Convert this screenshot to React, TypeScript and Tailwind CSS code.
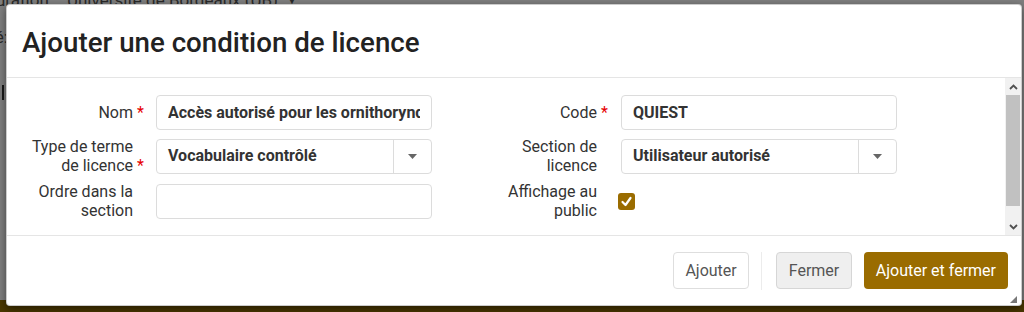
import React from 'react';

const Required = () => (
  <span className="inline-block w-0 whitespace-nowrap">
    <span className="ml-[4px] text-[#e60000]">*</span>
  </span>
);

const Label = ({ children, required }: { children: React.ReactNode; required?: boolean }) => (
  <div className="w-[111px] shrink-0 text-right text-[16px] leading-[19px] text-[#333]">
    {children}
    {required && <Required />}
  </div>
);

const TextInput = ({ value }: { value?: string }) => (
  <div className="flex h-[35px] w-[276px] items-center rounded-[4px] border border-[#dcdcdc] bg-white px-[11px] text-[16px] font-bold text-[#333]">
    <span className="block overflow-hidden whitespace-nowrap">{value}</span>
  </div>
);

const Select = ({ value }: { value: string }) => (
  <div className="flex h-[35px] w-[276px] items-stretch rounded-[4px] border border-[#dcdcdc] bg-white text-[16px] font-bold text-[#333]">
    <div className="flex flex-1 items-center overflow-hidden whitespace-nowrap px-[11px]">{value}</div>
    <div className="flex w-[38px] items-center justify-center border-l border-[#dcdcdc]">
      <svg width="9" height="5" viewBox="0 0 9 5">
        <path d="M0 0h9L4.5 5z" fill="#666" />
      </svg>
    </div>
  </div>
);

const Checkbox = () => (
  <div className="ml-[-3px] flex h-[17px] w-[17px] items-center justify-center rounded-[3px] bg-[#9a6c00]">
    <svg width="13" height="13" viewBox="0 0 13 13">
      <path d="M2.5 7l3 3 5-7" fill="none" stroke="#fff" strokeWidth="2.2" strokeLinecap="round" strokeLinejoin="round" />
    </svg>
  </div>
);

const Chevron = ({ up }: { up?: boolean }) => (
  <svg width="9" height="6" viewBox="0 0 9 6">
    <path d={up ? 'M1 5l3.5-3.5L8 5' : 'M1 1l3.5 3.5L8 1'} fill="none" stroke="#505050" strokeWidth="1.8" />
  </svg>
);

export default function App() {
  return (
    <div className="relative h-[312px] w-[1024px] overflow-hidden font-['Roboto',sans-serif]">
      {/* page behind the modal */}
      <div className="flex h-full flex-col bg-white text-[#555]">
        <div className="-mt-[10px] flex h-[20px] items-center whitespace-nowrap text-[17px] leading-[20px]">
          <span className="ml-[-4px]">uration:</span>
          <span className="ml-[14px]">Université de Bordeaux (UB)</span>
          <span className="ml-[8px] text-[12px]">▼</span>
        </div>
        <div className="flex-1">
          <div className="ml-[-10px] mt-[20px] text-[16px] leading-[16px]">té:</div>
          <div className="ml-[2px] mt-[39px] h-[15px] w-[2px] bg-[#333]" />
        </div>
        <div className="h-[12px] bg-[#977100]" />
      </div>
      <div className="absolute inset-0 bg-black/50" />

      {/* modal */}
      <div className="absolute left-[6px] top-[4px] flex h-[302px] w-[1016px] flex-col rounded-[4px] border border-black/20 bg-white shadow-[0_3px_9px_rgba(0,0,0,0.5)]">
        <div className="flex h-[73px] shrink-0 items-center border-b border-[#e5e5e5] pl-[15px]">
          <h1 className="pt-[4px] text-[27.7px] font-medium text-[#222]">Ajouter une condition de licence</h1>
        </div>

        <div className="flex h-[158px] shrink-0 border-b border-[#e5e5e5]">
          <div className="flex flex-1 flex-col gap-[7px] pl-[15px] pt-[17px]">
            <div className="flex items-center">
              <div className="flex w-[410px] items-center gap-[23px]">
                <Label required>Nom</Label>
                <TextInput value="Accès autorisé pour les ornithorynques" />
              </div>
              <div className="ml-[54px] flex items-center gap-[24px]">
                <Label required>Code</Label>
                <TextInput value="QUIEST" />
              </div>
            </div>
            <div className="flex items-center">
              <div className="flex w-[410px] items-center gap-[23px]">
                <Label required>
                  Type de terme
                  <br />
                  de licence
                </Label>
                <Select value="Vocabulaire contrôlé" />
              </div>
              <div className="ml-[54px] flex items-center gap-[24px]">
                <Label>
                  Section de
                  <br />
                  licence
                </Label>
                <Select value="Utilisateur autorisé" />
              </div>
            </div>
            <div className="flex items-center">
              <div className="flex w-[410px] items-center gap-[23px]">
                <Label>
                  Ordre dans la
                  <br />
                  section
                </Label>
                <TextInput />
              </div>
              <div className="ml-[54px] flex items-center gap-[24px]">
                <Label>
                  Affichage au
                  <br />
                  public
                </Label>
                <Checkbox />
              </div>
            </div>
          </div>
          <div className="flex w-[16px] shrink-0 flex-col bg-[#f1f1f1]">
            <div className="flex h-[17px] items-center justify-center">
              <Chevron up />
            </div>
            <div className="mx-[1px] h-[111px] bg-[#c1c1c1]" />
            <div className="flex-1" />
            <div className="flex h-[17px] items-center justify-center">
              <Chevron />
            </div>
          </div>
        </div>

        <div className="relative flex flex-1 items-start justify-end pr-[13px] pt-[16px] text-[16px]">
          <button className="h-[37px] rounded-[4px] border border-[#dedede] bg-white px-[11.5px] text-[#555]">Ajouter</button>
          <div className="ml-[12px] mr-[14px] h-[38px] w-px bg-[#ececec]" />
          <button className="h-[37px] rounded-[4px] border border-[#d6d6d6] bg-[#efefef] px-[11.5px] text-[#555]">Fermer</button>
          <button className="ml-[12px] h-[37px] rounded-[4px] bg-[#9a6c00] px-[12px] text-white">Ajouter et fermer</button>
          <svg className="absolute bottom-[2px] right-[4px]" width="7" height="7" viewBox="0 0 7 7">
            <path d="M7 0v7H0z" fill="#777" />
          </svg>
        </div>
      </div>
    </div>
  );
}
